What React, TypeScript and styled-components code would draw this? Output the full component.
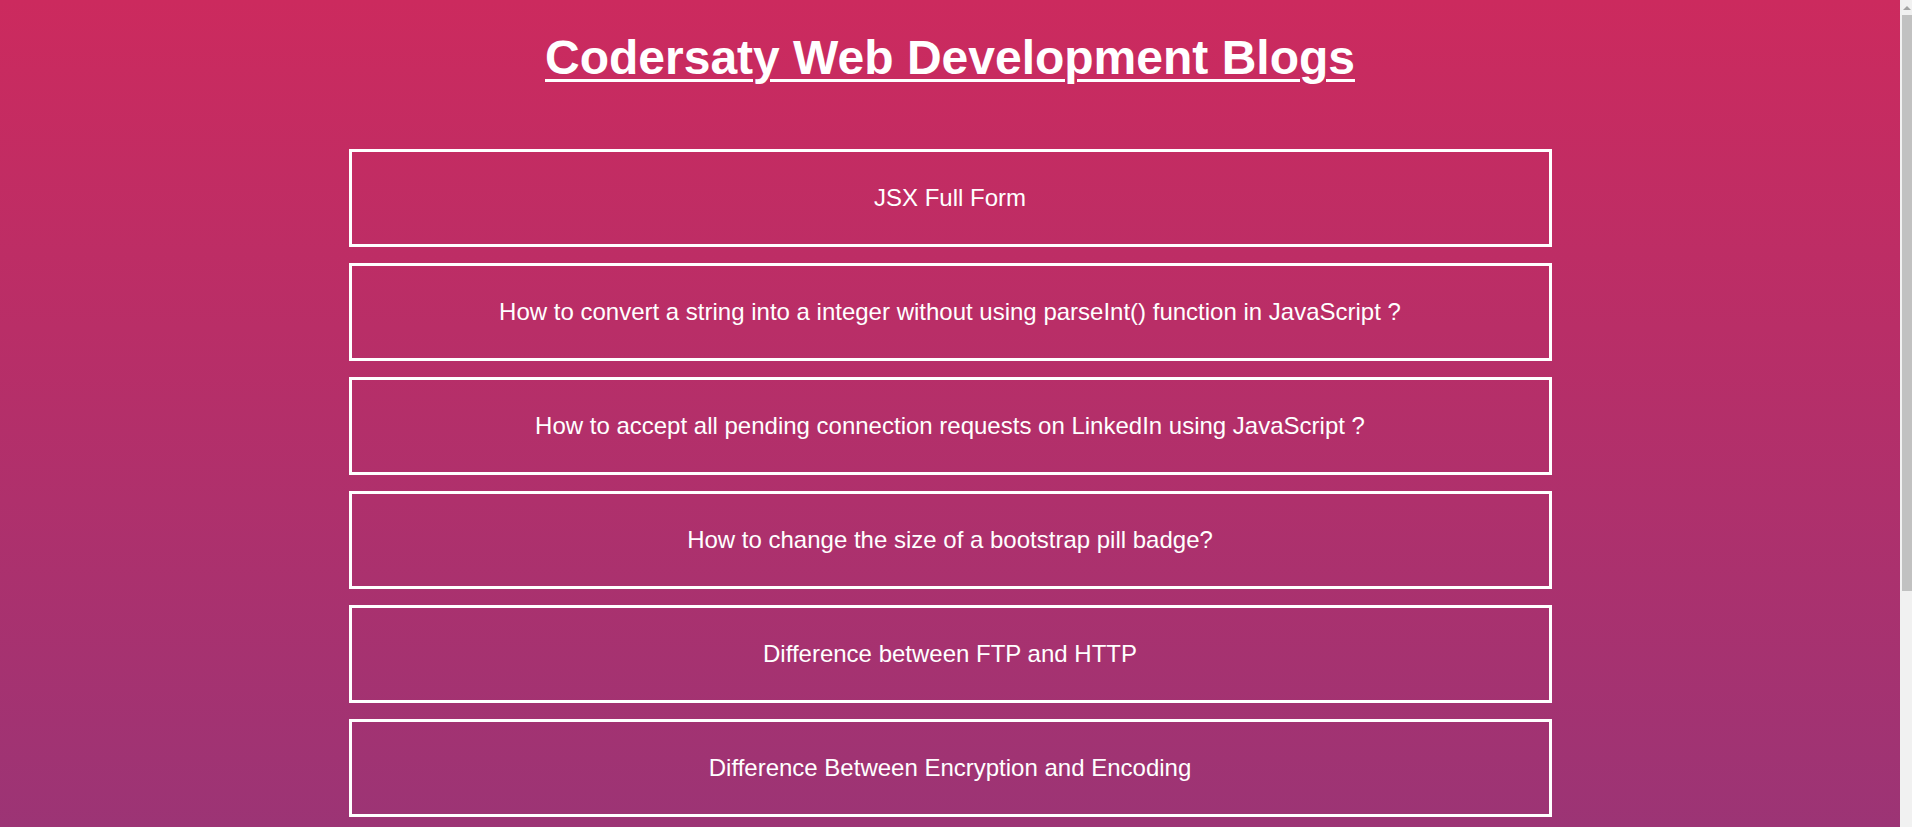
import * as React from 'react';
import styled, { createGlobalStyle } from 'styled-components';

const GlobalStyle = createGlobalStyle`
  html, body {
    margin: 0;
    padding: 0;
    overflow: hidden;
  }

  body {
    font-family: "Liberation Sans", Arial, sans-serif;
    color: #ffffff;
  }
`;

const Shell = styled.div`
  display: flex;
  height: 100vh;
`;

const Main = styled.main`
  flex: 1;
  overflow: hidden;
  background: linear-gradient(to bottom, #cc2a5e, #9c3475);
`;

const ScrollRail = styled.div`
  width: 12px;
  flex-shrink: 0;
  display: flex;
  flex-direction: column;
  align-items: flex-end;
  background-color: #f1f1f1;
`;

const ArrowBox = styled.div`
  width: 10px;
  height: 15px;
  display: flex;
  align-items: center;
  justify-content: center;
`;

const UpArrow = styled.div`
  width: 0;
  height: 0;
  border-left: 4px solid transparent;
  border-right: 4px solid transparent;
  border-bottom: 4px solid #a3a3a3;
`;

const Thumb = styled.div`
  width: 10px;
  height: 576px;
  background-color: #c1c1c1;
`;

const Page = styled.div`
  display: flex;
  flex-direction: column;
  align-items: center;
  padding: 0 0 40px;
`;

const Title = styled.h1`
  margin: 28px 0 0;
  font-size: 48px;
  font-weight: 700;
  text-decoration: underline;
  text-underline-offset: 5px;
  text-decoration-thickness: 3px;
  line-height: 60px;
`;

const BlogList = styled.ul`
  list-style-type: none;
  margin: 61px 0 0;
  padding: 0;
  width: 1203px;
  display: flex;
  flex-direction: column;
  gap: 16px;
`;

const BlogCard = styled.li`
  box-sizing: border-box;
  height: 98px;
  border: 3px solid #ffffff;
  display: flex;
  align-items: center;
  justify-content: center;
  font-size: 24px;
  cursor: pointer;
`;

const blogs = [
  'JSX Full Form',
  'How to convert a string into a integer without using parseInt() function in JavaScript ?',
  'How to accept all pending connection requests on LinkedIn using JavaScript ?',
  'How to change the size of a bootstrap pill badge?',
  'Difference between FTP and HTTP',
  'Difference Between Encryption and Encoding',
  'How to create a responsive navbar using HTML and CSS ?',
  'Difference between var, let and const in JavaScript',
];

const App = () => (
  <>
    <GlobalStyle />
    <Shell>
      <Main>
        <Page>
          <Title>Codersaty Web Development Blogs</Title>
          <BlogList>
            {blogs.map((blog) => (
              <BlogCard key={blog}>{blog}</BlogCard>
            ))}
          </BlogList>
        </Page>
      </Main>
      <ScrollRail>
        <ArrowBox>
          <UpArrow />
        </ArrowBox>
        <Thumb />
      </ScrollRail>
    </Shell>
  </>
);

export default App;
